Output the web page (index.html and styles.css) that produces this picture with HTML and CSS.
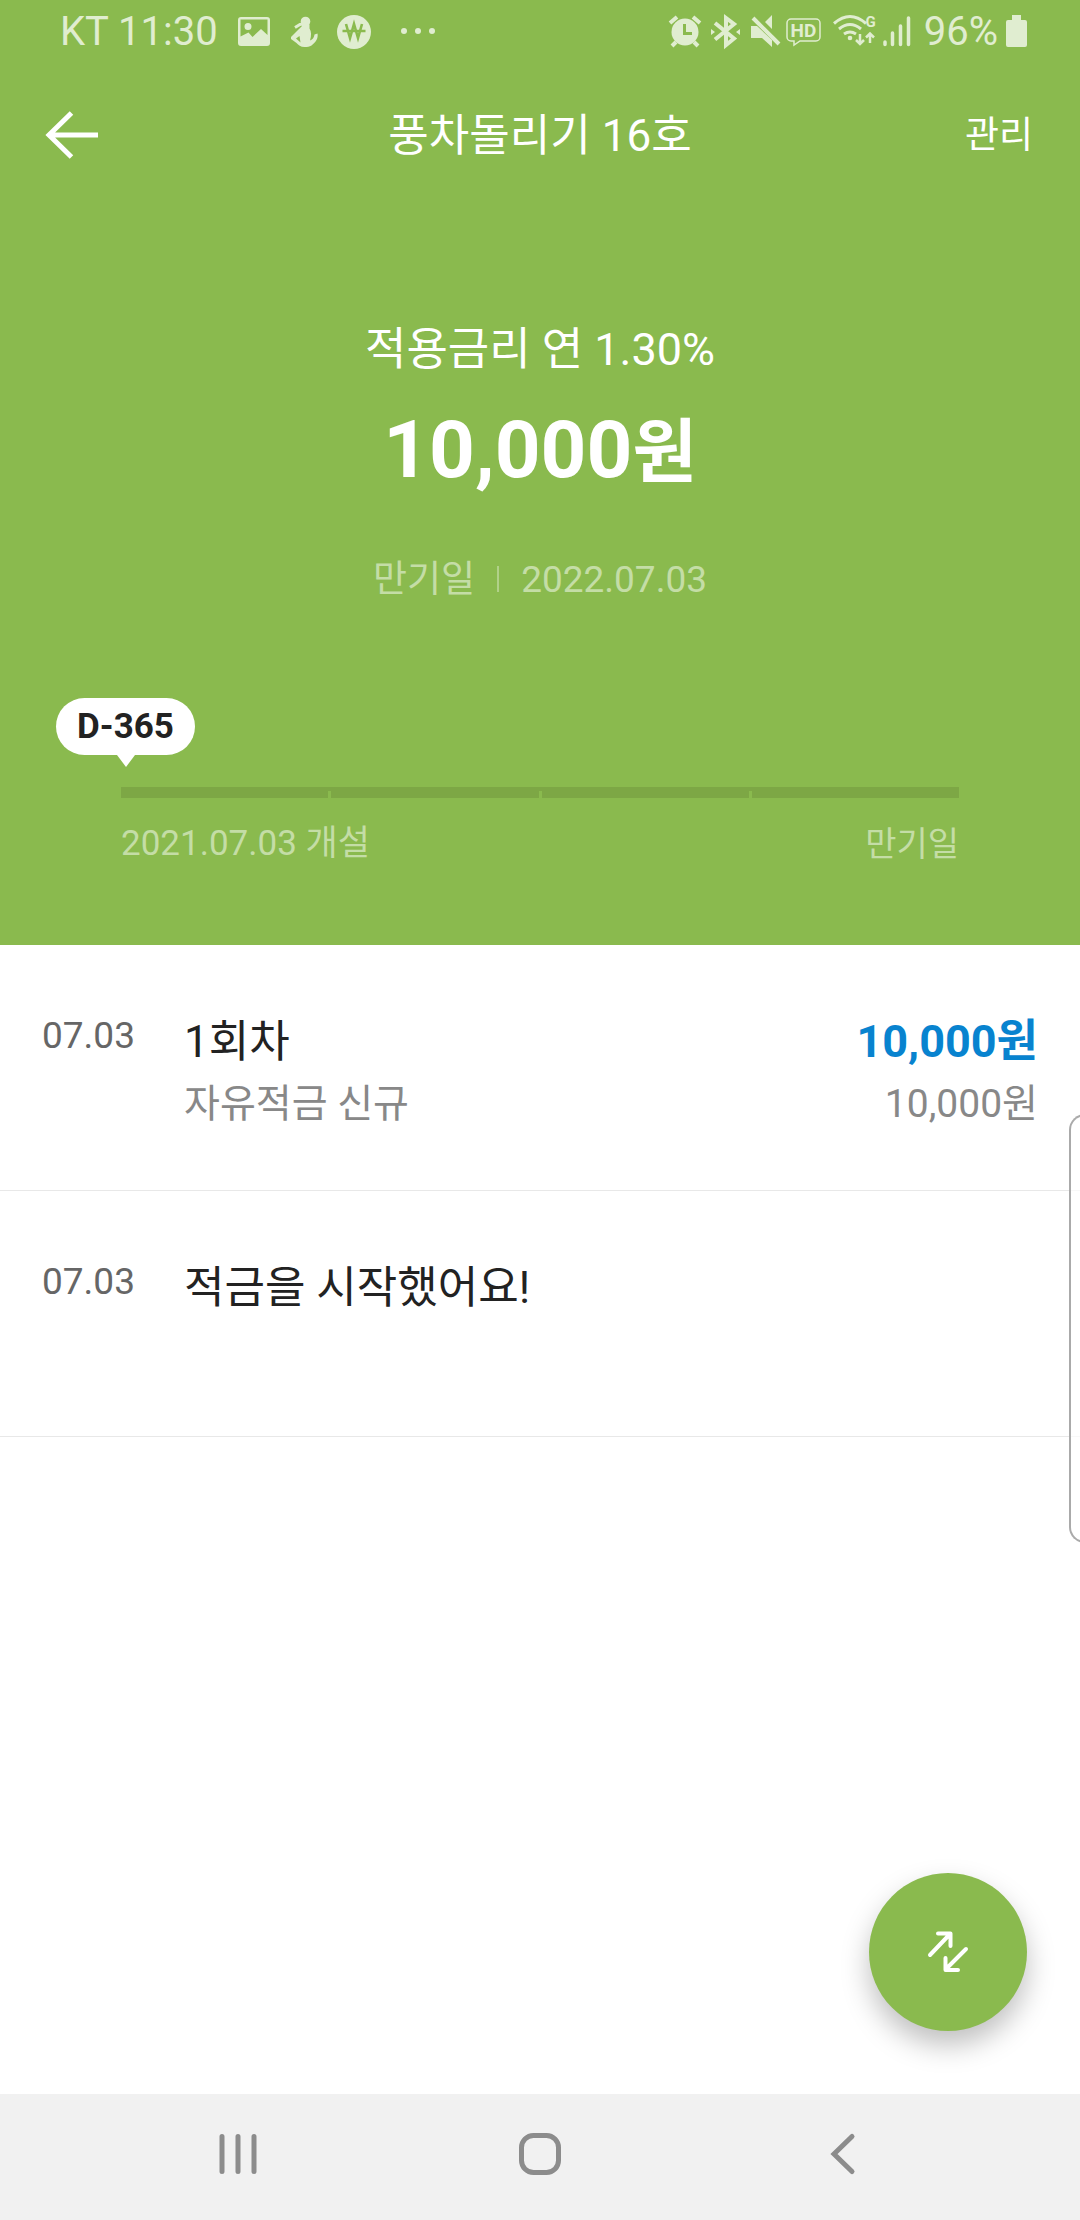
FILE: index.html
```html
<!DOCTYPE html>
<html lang="ko">
<head>
<meta charset="utf-8">
<meta name="viewport" content="width=device-width, initial-scale=1">
<title>풍차돌리기 16호</title>
<link rel="stylesheet" href="styles.css">
</head>
<body>
<div class="app">
  <header class="hero">
    <div class="status">
      <div class="status-group">
        <span class="status-text">KT 11:30</span>
        <svg class="status-left-icons" width="216" height="62" viewBox="227 0 216 62" fill="currentColor" aria-hidden="true">
          <path fill-rule="evenodd" d="M240 16h26a3 3 0 0 1 3 3v23a3 3 0 0 1-3 3h-26a3 3 0 0 1-3-3V19a3 3 0 0 1 3-3zm-.500 2.500v17l8-4 4 4.500 8.500-8 6.500 6V18.500zM247 22a3.500 3.500 0 1 1 0 7 3.500 3.500 0 0 1 0-7z"/>
          <circle cx="304.500" cy="20.500" r="4.800"/>
          <path d="M301 23.500h7.500v4c2 3 2 7 .500 12 3-1 4-3 4.500-6l3-1c1 5-2 9-6 12-2 1.500-4 1.500-7 1.500-4 0-6-2-8-4l-5.500-4v-2l8-8 3-3zM298.500 35l-3.500 2.500 4.500 4z" fill-rule="evenodd"/>
          <path d="M294 26.500l5-3 3-.500" fill="none" stroke="currentColor" stroke-width="3"/>
          <circle cx="353" cy="31" r="17"/>
          <path d="M345 23l4 14 4-14 4 14 4-14M341.500 30h23" fill="none" stroke="#8aba4e" stroke-width="2.600"/>
          <circle cx="403" cy="30" r="3"/><circle cx="417" cy="30" r="3"/><circle cx="431" cy="30" r="3"/>
        </svg>
      </div>
      <div class="status-group">
        <svg width="43" height="62" viewBox="664 0 43 62" fill="none" stroke="currentColor" aria-hidden="true">
          <circle cx="686" cy="31" r="13.500" fill="currentColor" stroke="none"/>
          <path d="M671 22l7-6M701 22l-7-6" stroke-width="4"/>
          <path d="M677 41l-4 4M695 41l4 4" stroke-width="4"/>
          <path d="M685.500 23v9.500h7.500" stroke="#8aba4e" stroke-width="3"/>
        </svg>
        <svg width="39" height="62" viewBox="707 0 39 62" fill="none" stroke="currentColor" stroke-width="4" aria-hidden="true">
          <path d="M716 22l19 15.500-8 6.500V17l8 6-19 15.500"/>
          <path d="M712 28l4 3-4 3zM741 28l-4 3 4 3z" fill="currentColor" stroke="none"/>
        </svg>
        <svg width="38" height="62" viewBox="746 0 38 62" fill="currentColor" aria-hidden="true">
          <path d="M752 25h6l15 14v7l-10-9h-11zM773 14v14l-7-7z"/>
          <path d="M754 17l26 26" stroke="currentColor" stroke-width="4"/>
        </svg>
        <svg width="43" height="62" viewBox="784 0 43 62" fill="none" aria-hidden="true">
          <path d="M792 18h25a4 4 0 0 1 4 4v14a4 4 0 0 1-4 4h-16l-6 4v-4h-3a4 4 0 0 1-4-4V22a4 4 0 0 1 4-4z" stroke="currentColor" stroke-width="1.500"/>
          <text class="hd-text" x="804.500" y="36" text-anchor="middle" fill="currentColor">HD</text>
        </svg>
        <svg width="52" height="62" viewBox="827 0 52 62" fill="none" stroke="currentColor" stroke-width="3" aria-hidden="true">
          <path d="M835 22.500q16-14 32 0M840 28q11-9 22 0M845 33q6-4 12 0"/>
          <circle cx="851" cy="37" r="2.300" fill="currentColor" stroke="none"/>
          <path d="M861 33v10M857 39l4 4 4-4M871 42V32M867 36.500l4-4 4 4" stroke-width="2.500"/>
          <text class="g-text" x="871.500" y="26" text-anchor="middle" fill="currentColor" stroke="none">G</text>
        </svg>
        <svg width="46" height="62" viewBox="879 0 46 62" stroke="currentColor" stroke-width="3.500" stroke-linecap="round" aria-hidden="true">
          <path d="M886 41v2.500M893.500 32v11.500M901.500 25v18.500M909.500 17v26.500"/>
        </svg>
        <span class="status-text">96%</span>
        <svg width="30" height="62" viewBox="998 0 30 62" fill="currentColor" aria-hidden="true">
          <path d="M1012 14h9v5h4a2 2 0 0 1 2 2v23a2 2 0 0 1-2 2h-17a2 2 0 0 1-2-2V21a2 2 0 0 1 2-2h4z"/>
        </svg>
      </div>
    </div>

    <div class="appbar">
      <button class="back" type="button" aria-label="뒤로">
        <svg width="56" height="50" viewBox="0 0 56 50" fill="none" stroke="currentColor" stroke-width="5"><path d="M53 25H4M26.500 3L4 25l22.500 22"/></svg>
      </button>
      <h1 class="title">풍차돌리기 16호</h1>
      <button class="manage" type="button">관리</button>
    </div>

    <section class="summary">
      <p class="rate">적용금리 연 1.30%</p>
      <p class="balance">10,000<span class="won">원</span></p>
      <p class="maturity"><span>만기일</span><time class="maturity-date">2022.07.03</time></p>
    </section>

    <section class="progress">
      <span class="bubble">D-365</span>
      <div class="track"><span></span><span></span><span></span><span></span></div>
      <div class="range"><span>2021.07.03 개설</span><span class="range-end">만기일</span></div>
    </section>
  </header>

  <main class="history">
    <ul class="list">
      <li class="row">
        <time class="date">07.03</time>
        <div class="entry">
          <p class="name">1회차</p>
          <p class="note">자유적금 신규</p>
        </div>
        <div class="entry amounts">
          <p class="name paid">10,000원</p>
          <p class="note">10,000원</p>
        </div>
      </li>
      <li class="row">
        <time class="date">07.03</time>
        <div class="entry">
          <p class="name">적금을 시작했어요!</p>
        </div>
      </li>
    </ul>
    <div class="edge-handle"></div>
    <button class="fab" type="button" aria-label="이체">
      <svg width="44" height="44" viewBox="0 0 44 44" fill="none" stroke="currentColor" stroke-width="4" stroke-linecap="round" stroke-linejoin="round"><path d="M4 25L24 4M12 3.500h12.500V16M40 19L20 39M19.500 28v12h12.500"/></svg>
    </button>
  </main>

  <nav class="navbar">
    <button type="button" aria-label="최근 앱">
      <svg width="44" height="44" viewBox="0 0 44 44" fill="none" stroke="currentColor" stroke-width="5" stroke-linecap="round"><path d="M6 4.500v35M22 4.500v35M38 4.500v35"/></svg>
    </button>
    <button type="button" aria-label="홈">
      <svg width="44" height="44" viewBox="0 0 44 44" fill="none" stroke="currentColor" stroke-width="5"><rect x="3.500" y="3.500" width="37" height="37" rx="12"/></svg>
    </button>
    <button type="button" aria-label="뒤로">
      <svg width="44" height="44" viewBox="0 0 44 44" fill="none" stroke="currentColor" stroke-width="5" stroke-linecap="round"><path d="M32 4.500L14 22l18 17.500"/></svg>
    </button>
  </nav>
</div>
</body>
</html>
```

FILE: styles.css
```css
* {
  box-sizing: border-box;
}

body,
h1,
p,
ul {
  margin: 0;
  padding: 0;
}

body {
  background: #fff;
  color: #222;
  font-family: Roboto, "Noto Sans CJK KR", sans-serif;
}

button {
  display: flex;
  align-items: center;
  justify-content: center;
  padding: 0;
  border: 0;
  background: none;
  color: inherit;
  font: inherit;
}

svg {
  display: block;
  flex: none;
}

.app {
  display: flex;
  flex-direction: column;
  min-height: 100vh;
}

.hero {
  padding-bottom: 76px;
  background: #8aba4e;
  color: #fff;
}

/* Status bar */
.status {
  display: flex;
  justify-content: space-between;
  height: 64px;
  padding: 0 52px 0 60px;
  color: #e0edd0;
}

.status-group {
  display: flex;
  align-items: center;
}

.status-text {
  font-size: 40px;
  line-height: 64px;
}

.status-left-icons {
  margin-left: 10px;
}

.hd-text {
  font-size: 19px;
  font-weight: 700;
}

.g-text {
  font-size: 15px;
  font-weight: 700;
}

/* App bar */
.appbar {
  display: grid;
  grid-template-columns: 1fr auto 1fr;
  align-items: center;
  height: 142px;
  padding: 0 45px;
}

.back {
  justify-self: start;
}

.title {
  padding-top: 2px;
  font-size: 44px;
  font-weight: 400;
  line-height: 60px;
}

.manage {
  justify-self: end;
  padding: 2px 2px 0 0;
  font-size: 37px;
  line-height: 60px;
}

/* Balance summary */
.summary {
  padding-top: 114px;
  text-align: center;
}

.rate {
  font-size: 45px;
  line-height: 60px;
}

.balance {
  margin-top: 20px;
  font-size: 80px;
  font-weight: 700;
  line-height: 100px;
}

.won {
  font-size: 70px;
  line-height: 1;
}

.maturity {
  display: flex;
  justify-content: center;
  align-items: center;
  margin-top: 52px;
  color: #c4dda6;
  font-size: 37px;
  line-height: 56px;
}

.maturity-date::before {
  content: "";
  display: inline-block;
  width: 2px;
  height: 26px;
  margin: 0 22px;
  background: #b1d189;
}

/* Term progress */
.progress {
  margin: 90px 121px 0;
}

.bubble {
  position: relative;
  display: block;
  width: 139px;
  margin-left: -65px;
  border-radius: 29px;
  background: #fff;
  color: #222;
  font-size: 35px;
  font-weight: 700;
  line-height: 57px;
  text-align: center;
}

.bubble::after {
  content: "";
  position: absolute;
  top: 100%;
  left: 50%;
  margin-left: -9px;
  border: 9px solid transparent;
  border-top: 12px solid #fff;
  border-bottom: 0;
}

.track {
  display: flex;
  height: 11px;
  margin-top: 32px;
  background: #7da745;
}

.track span {
  flex: 1;
}

.track span + span {
  margin-top: 4px;
  border-left: 3px solid #8aba4e;
}

.range {
  display: flex;
  justify-content: space-between;
  margin-top: 21px;
  color: #c4dda6;
  font-size: 35px;
  line-height: 50px;
}

.range-end {
  font-size: 34px;
}

/* Transaction history */
.history {
  position: relative;
  flex: 1;
  overflow: hidden;
}

.list {
  list-style: none;
}

.row {
  display: flex;
  min-height: 246px;
  padding: 65px 42px 0;
  border-bottom: 1px solid #e8e8e8;
}

.date {
  width: 142px;
  color: #666;
  font-size: 37px;
  line-height: 52px;
}

.entry {
  padding-top: 2px;
}

.amounts {
  margin-left: auto;
  text-align: right;
}

.name {
  font-size: 44px;
  line-height: 60px;
}

.paid {
  color: #0883cf;
  font-size: 45px;
  font-weight: 700;
}

.note {
  margin-top: 4px;
  color: #888;
  font-size: 39px;
  line-height: 56px;
}

.edge-handle {
  position: absolute;
  top: 169px;
  right: -9px;
  width: 20px;
  height: 429px;
  border: 2px solid #aaa;
  border-right: 0;
  border-radius: 16px 0 0 16px;
  background: rgba(255, 255, 255, 0.7);
}

.fab {
  position: absolute;
  right: 53px;
  bottom: 63px;
  width: 158px;
  height: 158px;
  border-radius: 50%;
  background: #8aba4e;
  box-shadow: 0 14px 28px rgba(0, 0, 0, 0.25);
  color: #fff;
}

/* System navigation */
.navbar {
  display: flex;
  height: 126px;
  padding: 0 8% 6px;
  background: #f1f1f1;
  color: #8c8c8c;
}

.navbar button {
  flex: 1;
}
```
